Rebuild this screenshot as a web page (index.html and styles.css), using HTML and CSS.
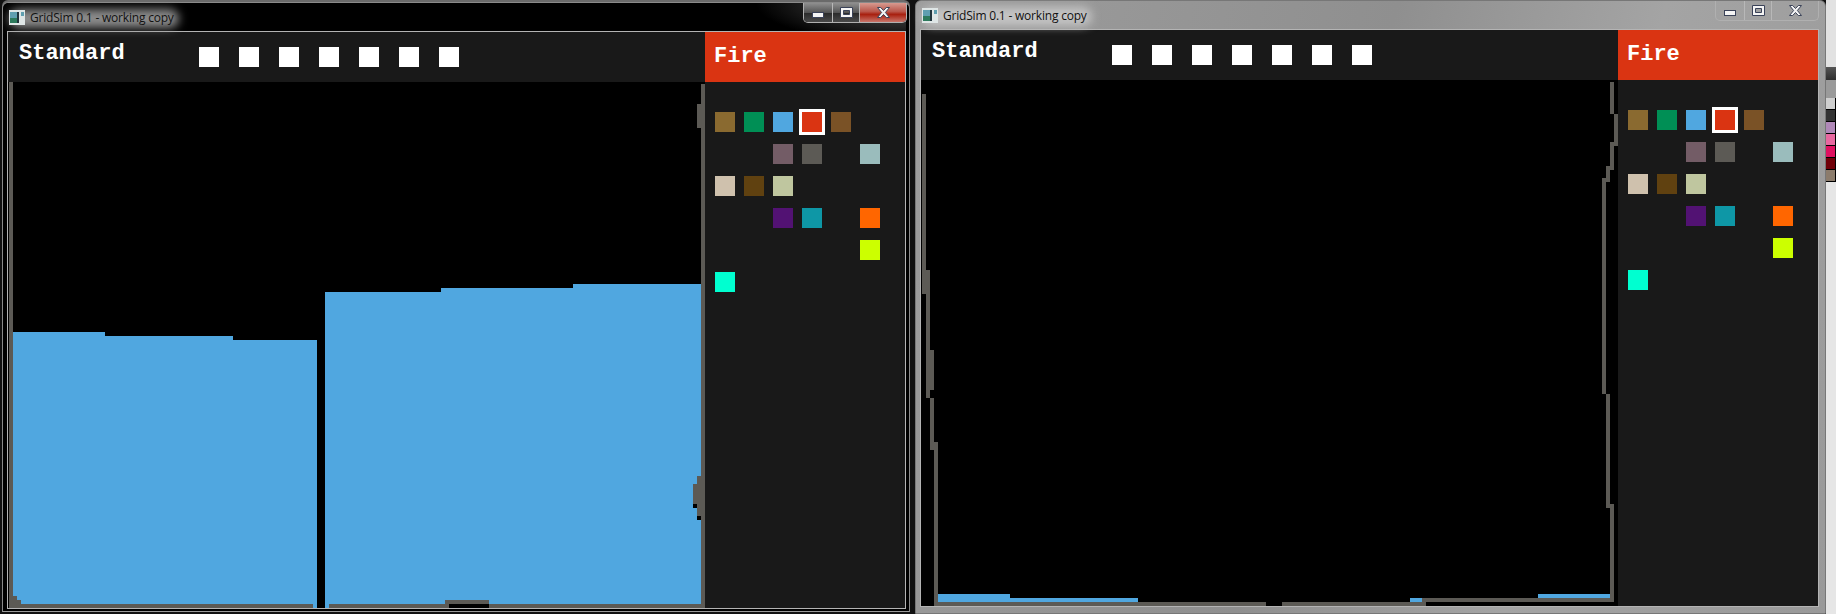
FILE: index.html
```html
<!DOCTYPE html>
<html lang="en">

<head>
  <meta charset="UTF-8" />
  <title>GridSim 0.1</title>
  <link rel="stylesheet" href="styles.css">
</head>

<body>
  <div class="window active">
    <div class="titlebar">
      <div class="title">
        <svg class="app-icon" width="16" height="15" viewBox="0 0 16 15">
          <rect width="16" height="15" fill="#dfe6e6" />
          <rect x="1" y="2" width="7" height="6" fill="#5f9fb0" />
          <rect x="1" y="8" width="7" height="5" fill="#2c7a5c" />
          <rect x="8" y="2" width="2" height="11" fill="#20343c" />
          <rect x="12" y="2" width="3" height="4" fill="#5f9fb0" />
        </svg>
        <span class="title-text">GridSim 0.1 - working copy</span>
      </div>
      <div class="controls">
        <div class="ctl ctl-min"><svg width="12" height="6" viewBox="0 0 12 6"><rect x="0.5" y="0.5" width="11" height="5" class="glyph" /></svg></div>
        <div class="ctl ctl-max"><svg width="13" height="11" viewBox="0 0 13 11"><path class="glyph" fill-rule="evenodd" d="M.5.5h12v10H.5zM3.500 3.500v4h6v-4z" /></svg></div>
        <div class="ctl ctl-close"><svg width="13" height="11" viewBox="0 0 13 11"><path class="glyph" d="M.5.5h3.200l2.800 3 2.800-3h3.200L8.400 5.500l4.100 5H9.300l-2.800-3-2.800 3H.5l4.100-5z" /></svg></div>
      </div>
    </div>

    <div class="client">
      <div class="topbar">
        <div class="mode">Standard</div>
        <div class="slots">
          <span></span><span></span><span></span><span></span><span></span><span></span><span></span>
        </div>
      </div>
      <div class="element-name">Fire</div>

      <svg class="grid" width="697" height="526" viewBox="0 0 697 526" shape-rendering="crispEdges">
        <path class="water" d="M5 250h92v276H5zM97 254h128v272H97zM225 258h84v268h-84zM317 210h116v316H317zM433 206h132v320H433zM565 202h128v324H565z" />
        <path class="wall" d="M1 0h4v526H1zM5 514h4v12H5zM9 518h4v8H9zM13 522h292v4H13zM321 522h116v4H321zM437 518h44v4h-44zM437 522h4v4h-4zM481 522h216v4H481zM693 2h4v524h-4zM689 22h4v24h-4zM689 394h4v40h-4zM685 402h4v20h-4z" />
        <path class="empty" d="M441 522h40v4h-40zM689 434h4v4h-4zM685 422h4v4h-4z" />
      </svg>

      <div class="palette">
        <span class="c-sand"></span><span class="c-green"></span><span class="c-water"></span><span class="c-fire selected"></span><span class="c-wood"></span><span></span>
        <span></span><span></span><span class="c-mauve"></span><span class="c-stone"></span><span></span><span class="c-ice"></span>
        <span class="c-cream"></span><span class="c-soil"></span><span class="c-moss"></span><span></span><span></span><span></span>
        <span></span><span></span><span class="c-purple"></span><span class="c-teal"></span><span></span><span class="c-orange"></span>
        <span></span><span></span><span></span><span></span><span></span><span class="c-lime"></span>
        <span class="c-aqua"></span>
      </div>
    </div>
  </div>

  <div class="window inactive">
    <div class="titlebar">
      <div class="title">
        <svg class="app-icon" width="16" height="15" viewBox="0 0 16 15">
          <rect width="16" height="15" fill="#dfe6e6" />
          <rect x="1" y="2" width="7" height="6" fill="#5f9fb0" />
          <rect x="1" y="8" width="7" height="5" fill="#2c7a5c" />
          <rect x="8" y="2" width="2" height="11" fill="#20343c" />
          <rect x="12" y="2" width="3" height="4" fill="#5f9fb0" />
        </svg>
        <span class="title-text">GridSim 0.1 - working copy</span>
      </div>
      <div class="controls">
        <div class="ctl ctl-min"><svg width="12" height="6" viewBox="0 0 12 6"><rect x="0.5" y="0.5" width="11" height="5" class="glyph" /></svg></div>
        <div class="ctl ctl-max"><svg width="13" height="11" viewBox="0 0 13 11"><path class="glyph" fill-rule="evenodd" d="M.5.5h12v10H.5zM3.500 3.500v4h6v-4z" /></svg></div>
        <div class="ctl ctl-close"><svg width="13" height="11" viewBox="0 0 13 11"><path class="glyph" d="M.5.5h3.200l2.800 3 2.800-3h3.200L8.400 5.500l4.100 5H9.300l-2.800-3-2.800 3H.5l4.100-5z" /></svg></div>
      </div>
    </div>

    <div class="client">
      <div class="topbar">
        <div class="mode">Standard</div>
        <div class="slots">
          <span></span><span></span><span></span><span></span><span></span><span></span><span></span>
        </div>
      </div>
      <div class="element-name">Fire</div>

      <svg class="grid" width="697" height="526" viewBox="0 0 697 526" shape-rendering="crispEdges">
        <path class="water" d="M17 514h72v8H17zM89 518h128v4H89zM489 518h12v4h-12zM617 514h72v4h-72z" />
        <path class="wall" d="M1 14h4v200H1zM5 190h4v128H5zM9 270h4v40H9zM9 318h4v52H9zM13 362h4v164h-4zM13 522h332v4H13zM361 522h144v4H361zM501 518h192v4H501zM689 2h4v32h-4zM693 34h4v32h-4zM689 62h4v28h-4zM685 86h4v16h-4zM681 98h4v216h-4zM685 314h4v114h-4zM689 424h4v98h-4z" />
      </svg>

      <div class="palette">
        <span class="c-sand"></span><span class="c-green"></span><span class="c-water"></span><span class="c-fire selected"></span><span class="c-wood"></span><span></span>
        <span></span><span></span><span class="c-mauve"></span><span class="c-stone"></span><span></span><span class="c-ice"></span>
        <span class="c-cream"></span><span class="c-soil"></span><span class="c-moss"></span><span></span><span></span><span></span>
        <span></span><span></span><span class="c-purple"></span><span class="c-teal"></span><span></span><span class="c-orange"></span>
        <span></span><span></span><span></span><span></span><span></span><span class="c-lime"></span>
        <span class="c-aqua"></span>
      </div>
    </div>
  </div>

  <div class="desktop-strip">
    <div class="strip-top"></div>
    <div class="strip-bar"></div>
    <div class="strip-tabs"></div>
    <div class="swatch strip-c1"></div>
    <div class="swatch strip-c2"></div>
    <div class="swatch strip-c3"></div>
    <div class="swatch strip-c4"></div>
    <div class="swatch strip-c5"></div>
    <div class="swatch strip-c6"></div>
    <div class="swatch strip-c7"></div>
  </div>
</body>

</html>
```

FILE: styles.css
```css
* {
  box-sizing: border-box;
  margin: 0;
  padding: 0;
}

html,
body {
  height: 614px;
  overflow: hidden;
}

body {
  display: flex;
  background: #111;
  padding-left: 2px;
  font-family: 'Open Sans', sans-serif;
}

/* windows */
.window {
  width: 908px;
  border: 1px solid #8a8a8a;
  border-radius: 6px 6px 0 0;
  padding: 0 3px 0 4px;
  flex: none;
}

.window.active {
  height: 610px;
  margin-top: 2px;
  background: #000;
  border-bottom: 1px solid #9a9a9a;
  box-shadow: 0 -2px 0 #6a6a6a;
}

.window.inactive {
  width: 911px;
  height: 614px;
  margin-left: 5px;
  background: linear-gradient(105deg, #9d9d9d 0, #8f8f8f 45%, #a4a4a4 70%, #999 100%);
  padding: 0 6px 0 4px;
  border-color: #777;
}

.titlebar {
  height: 28px;
  display: flex;
  justify-content: space-between;
  align-items: flex-start;
}

.active .titlebar {
  background: radial-gradient(ellipse 150px 40px at 100% 0, #5a5a5a, #000);
}

.title {
  display: flex;
  align-items: center;
  gap: 5px;
  height: 24px;
  padding: 5px 0 0 2px;
  position: relative;
}

.title::before {
  content: '';
  position: absolute;
  left: 2px;
  top: 6px;
  width: 170px;
  height: 19px;
  border-radius: 10px;
  filter: blur(5px);
}

.active .title::before {
  background: #8c8c8c;
}

.inactive .title::before {
  background: #c4c4c4;
}

.app-icon {
  position: relative;
}

.title-text {
  position: relative;
  font-size: 12px;
  letter-spacing: -0.2px;
  color: #111;
}

.controls {
  display: flex;
  height: 20px;
  border: 1px solid #b0b0b0;
  border-top: 0;
  border-radius: 0 0 5px 5px;
  overflow: hidden;
}

.active .controls {
  margin-right: -1px;
}

.ctl {
  display: flex;
  align-items: center;
  justify-content: center;
  border-left: 1px solid #b8b8b8;
}

.ctl:first-child {
  border-left: 0;
}

.ctl-min {
  width: 28px;
  align-items: flex-end;
  padding-bottom: 4px;
}

.ctl-max {
  width: 27px;
}

.ctl-close {
  width: 47px;
}

.active .ctl-min,
.active .ctl-max {
  background: linear-gradient(#8f8f8f, #555 50%, #2c2c2c 55%, #4a4a4a);
}

.active .ctl-close {
  background: linear-gradient(#d79a90, #b9564a 45%, #a8200f 60%, #c9756a);
}

.glyph {
  fill: #f4f4f4;
  stroke: #3a4258;
  stroke-width: 1;
}

/* client area */
.client {
  width: 899px;
  height: 578px;
  border: 1px solid #b4b4b4;
  background: #191919;
  display: grid;
  grid-template-columns: 697px 200px;
  grid-template-rows: 50px 526px;
}

.topbar {
  display: flex;
  align-items: flex-start;
  padding-left: 11px;
}

.mode,
.element-name {
  font-family: 'Liberation Mono', monospace;
  font-size: 22px;
  font-weight: 700;
  color: #fff;
}

.mode {
  width: 180px;
  padding-top: 9px;
}

.slots {
  display: flex;
  gap: 20px;
  padding-top: 15px;
}

.slots span {
  width: 20px;
  height: 20px;
  background: #fff;
}

.element-name {
  background: #da3412;
  padding: 12px 0 0 9px;
}

.grid {
  display: block;
  background: #000;
}

.water {
  fill: #50a7e0;
}

.wall {
  fill: #5c5a55;
}

.empty {
  fill: #000;
}

.palette {
  display: grid;
  grid-template-columns: repeat(6, 20px);
  grid-auto-rows: 20px;
  column-gap: 9px;
  row-gap: 12px;
  align-content: start;
  padding: 30px 0 0 10px;
}

.selected {
  outline: 3px solid #fff;
}

.c-sand { background: #8a6a30; }
.c-green { background: #008f55; }
.c-water { background: #50a7e0; }
.c-fire { background: #da3412; }
.c-wood { background: #7a5226; }
.c-mauve { background: #735c66; }
.c-stone { background: #5c5a55; }
.c-ice { background: #9abcbc; }
.c-cream { background: #cfc1ad; }
.c-soil { background: #604110; }
.c-moss { background: #bfc69f; }
.c-purple { background: #521273; }
.c-teal { background: #0e97a6; }
.c-orange { background: #ff6600; }
.c-lime { background: #ccff00; }
.c-aqua { background: #00ffd0; }

/* bit of the desktop behind the windows */
.desktop-strip {
  flex: 1;
  display: flex;
  flex-direction: column;
  background: #e6e6e6;
}

.strip-top { height: 67px; background: #e2e2e2; }
.strip-bar { height: 13px; background: linear-gradient(#555, #2e2e2e); }
.strip-tabs { height: 18px; background: #9a9a9a; }
.swatch { height: 12px; box-shadow: inset -1px -1px 0 #000; }
.strip-c1 { background: #cfcfcf; }
.strip-c2 { background: #333; }
.strip-c3 { background: #b088b8; }
.strip-c4 { background: #e868a0; }
.strip-c5 { background: #e01060; }
.strip-c6 { background: #700008; }
.strip-c7 { background: #8c7c6c; }
```
